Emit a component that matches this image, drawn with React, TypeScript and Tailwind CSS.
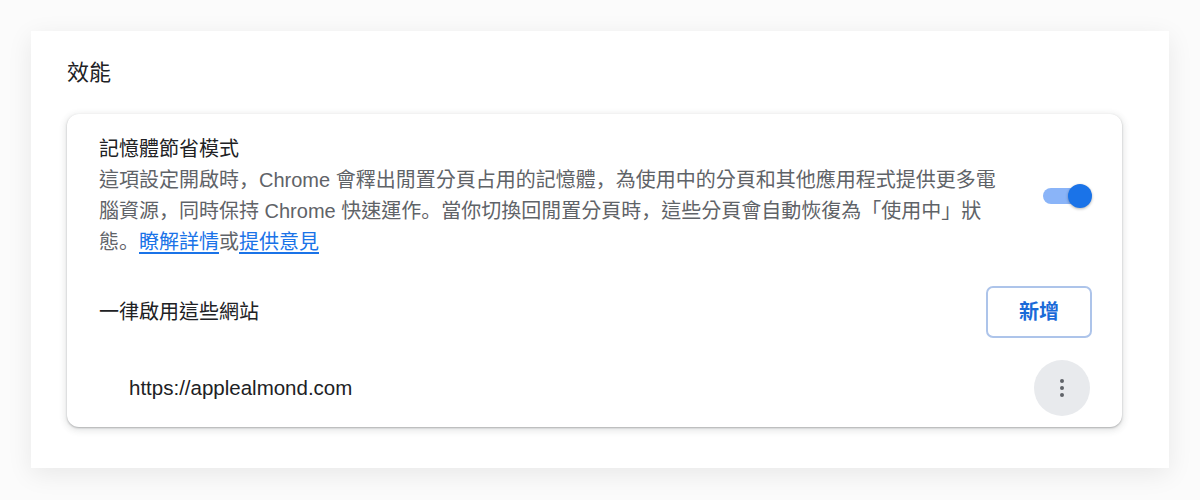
import React from "react";

const fontStack = {
  fontFamily: '"Liberation Sans", "Noto Sans CJK TC", sans-serif',
};

// Punctuation sits at the bottom-left in the reference, as the JP face draws it
function P({ children }: { children: string }) {
  return (
    <span
      className="leading-none"
      style={{ fontFamily: '"Noto Sans CJK JP", sans-serif' }}
    >
      {children}
    </span>
  );
}

function Toggle() {
  return (
    <div className="relative flex h-[26px] w-[50px] items-center">
      <div className="ml-px h-[16px] w-[42px] rounded-full bg-[#8ab4f8]" />
      <div className="absolute right-0 top-px size-[24px] rounded-full bg-[#1a73e8] shadow-[0_1px_3px_rgba(0,0,0,0.3)]" />
    </div>
  );
}

function MoreButton() {
  return (
    <button className="flex size-[56px] flex-col items-center justify-center gap-[3px] rounded-full bg-[#e8eaed]">
      <span className="size-[4px] rounded-full bg-[#5f6368]" />
      <span className="size-[4px] rounded-full bg-[#5f6368]" />
      <span className="size-[4px] rounded-full bg-[#5f6368]" />
    </button>
  );
}

export default function App() {
  return (
    <div
      className="h-[500px] w-[1200px] bg-[#fbfbfb] px-[31px] pt-[31px]"
      style={fontStack}
    >
      <div className="h-[437px] w-[1138px] bg-white px-[36px] pt-[27px] shadow-[0_6px_24px_rgba(0,0,0,0.08)]">
        {/* Section title */}
        <h2 className="text-[22px] leading-[30px] text-[#202124]">效能</h2>

        {/* Memory saver card */}
        <div className="mt-[26px] w-[1055px] rounded-[12px] bg-white pb-[11px] pl-[32px] pr-[30px] pt-[20px] shadow-[0_1px_2px_rgba(60,64,67,0.35),0_2px_6px_2px_rgba(60,64,67,0.12)]">
          <div className="flex items-center justify-between">
            <div className="w-[912px]">
              <p className="text-[20px] leading-[31px] text-[#202124]">
                記憶體節省模式
              </p>
              <p className="text-[20px] leading-[31px] text-[#5f6368]">
                這項設定開啟時<P>，</P>Chrome
                會釋出閒置分頁占用的記憶體<P>，</P>
                為使用中的分頁和其他應用程式提供更多電腦資源<P>，</P>同時保持
                Chrome 快速運作<P>。</P>
                當你切換回閒置分頁時<P>，</P>
                這些分頁會自動恢復為「使用中」狀態<P>。</P>
                <a className="text-[#1a73e8] underline underline-offset-[3px]">
                  瞭解詳情
                </a>
                或
                <a className="text-[#1a73e8] underline underline-offset-[3px]">
                  提供意見
                </a>
              </p>
            </div>
            <Toggle />
          </div>

          <div className="mt-[28px] flex items-center justify-between">
            <span className="text-[20px] text-[#202124]">一律啟用這些網站</span>
            <button className="flex h-[52px] w-[106px] items-center justify-center rounded-[7px] border-2 border-[#adc4ea] text-[20px] font-bold text-[#1a6ad8]">
              新增
            </button>
          </div>

          <div className="mt-[22px] flex items-center justify-between pr-[2px]">
            <span className="pl-[30px] text-[20.5px] text-[#202124]">
              https://applealmond.com
            </span>
            <MoreButton />
          </div>
        </div>
      </div>
    </div>
  );
}
